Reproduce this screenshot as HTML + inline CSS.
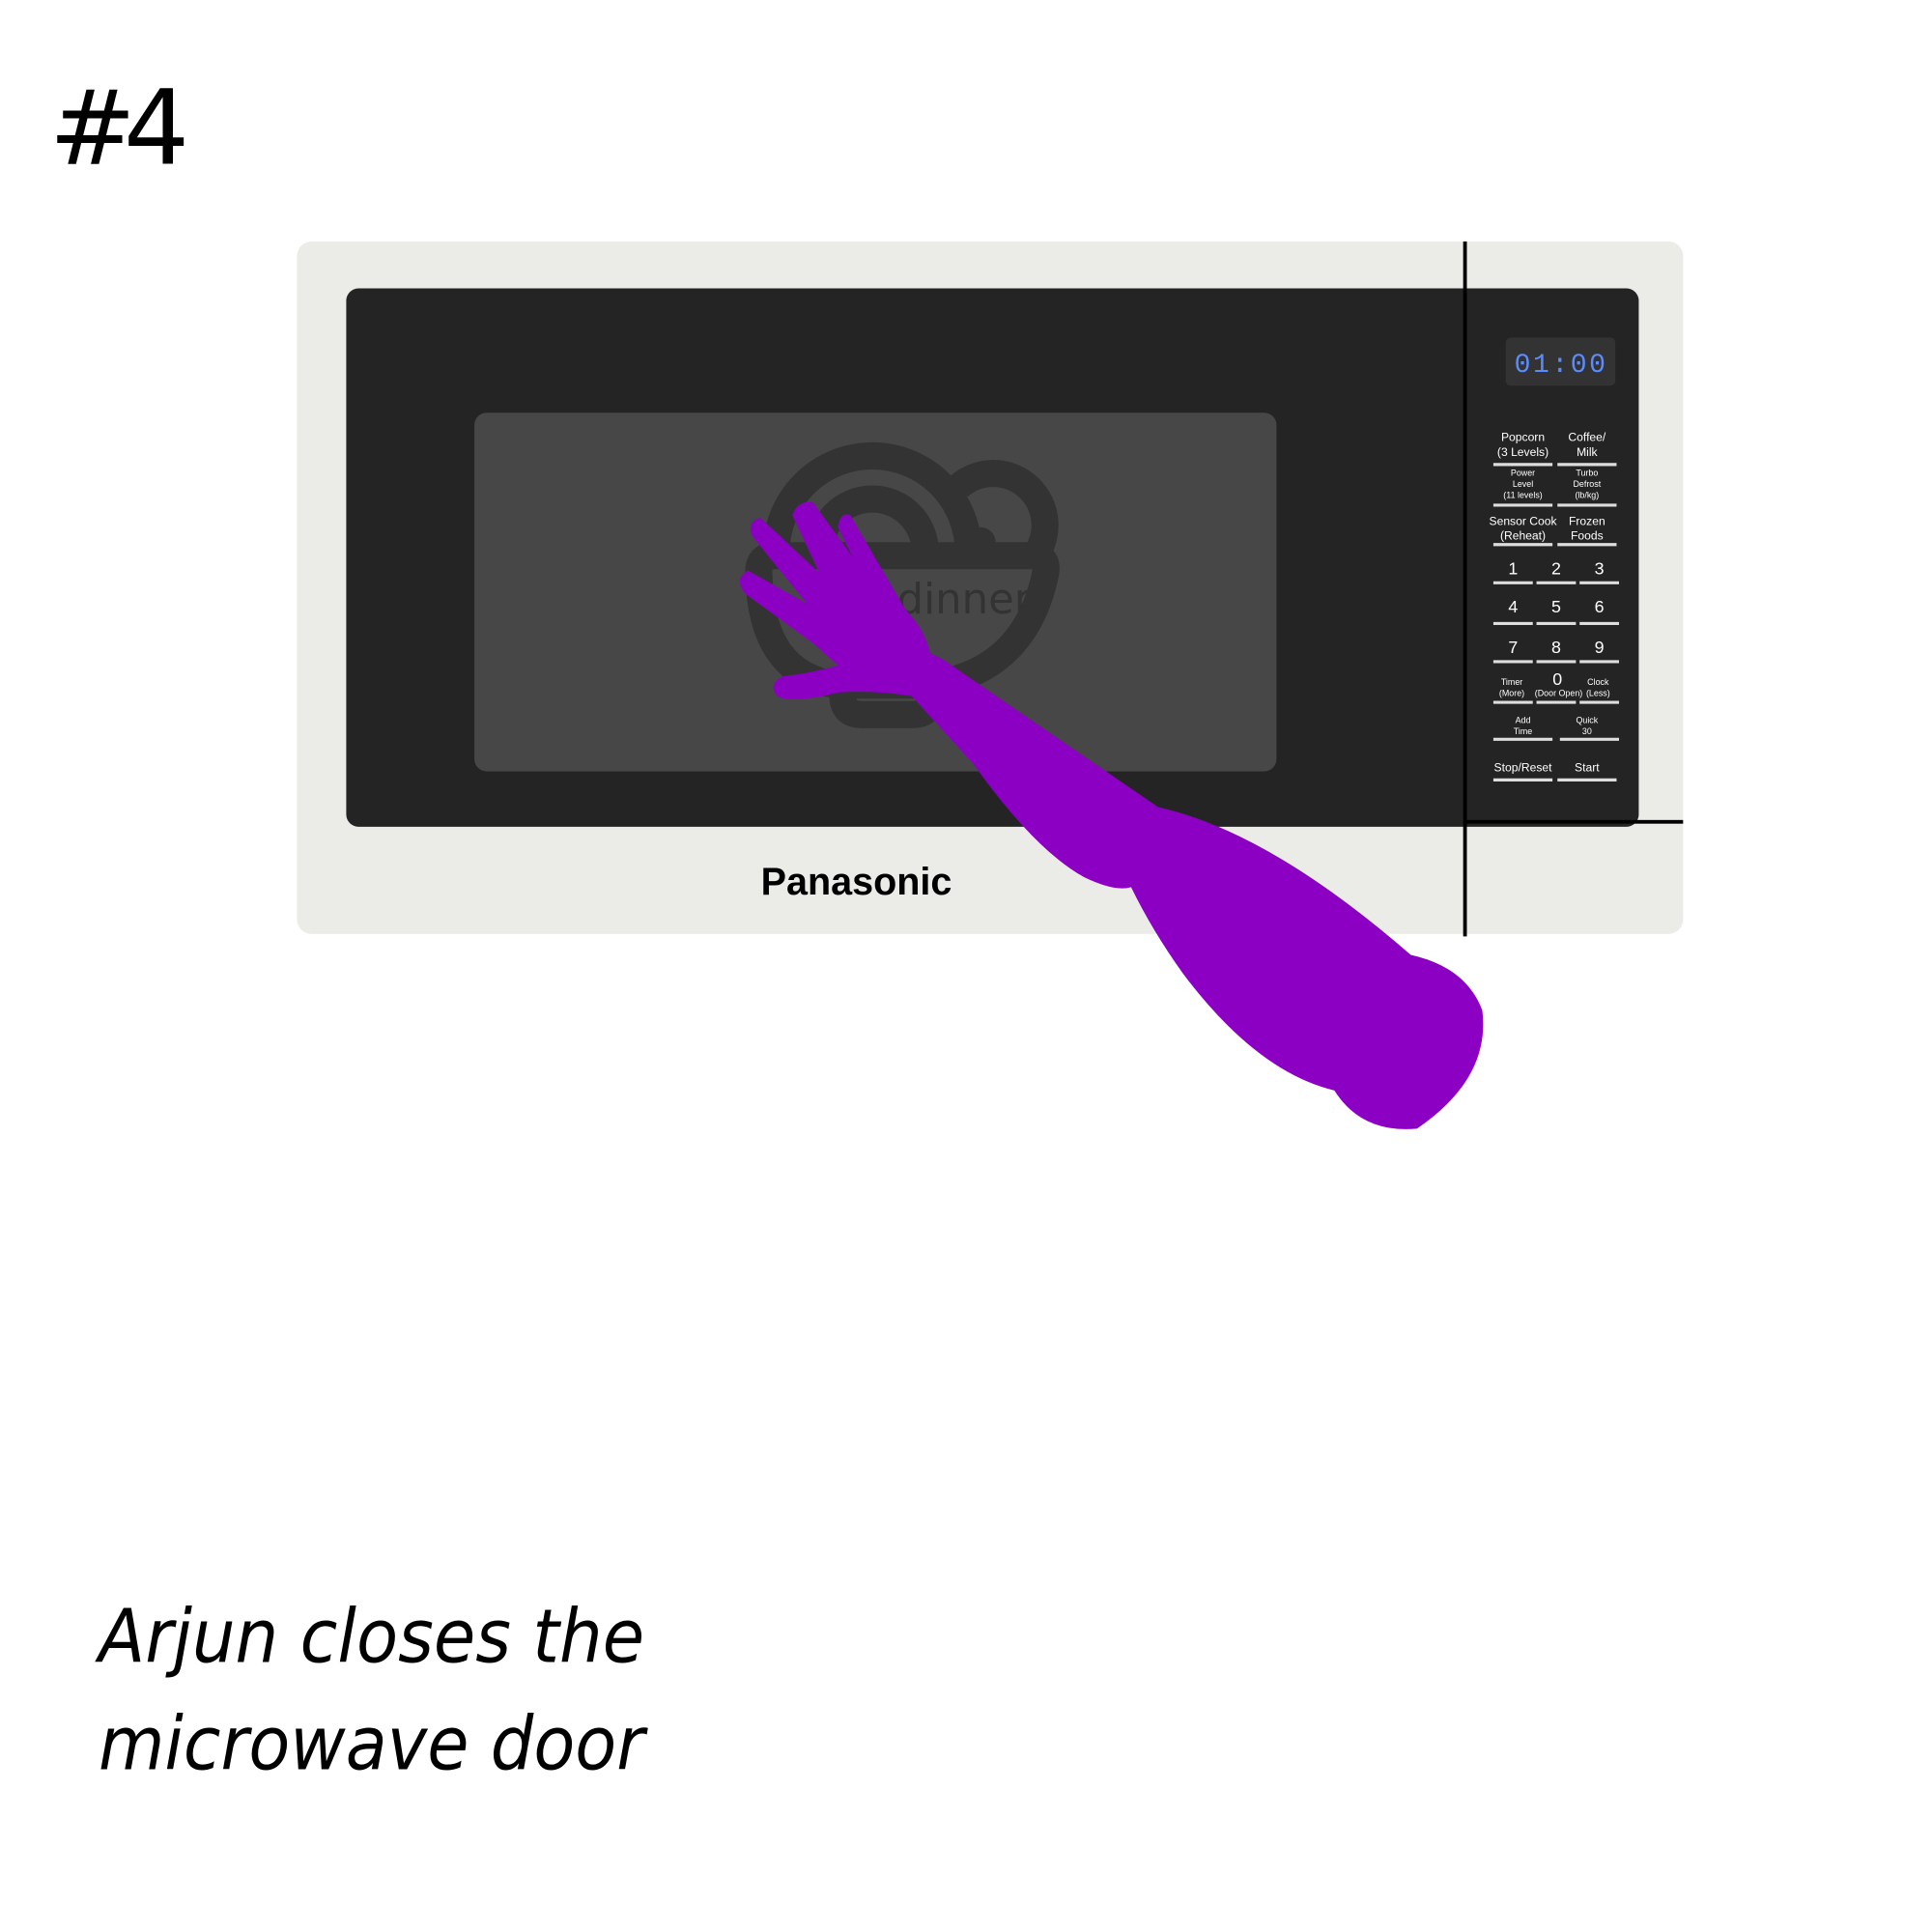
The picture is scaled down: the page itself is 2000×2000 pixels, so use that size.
<!DOCTYPE html>
<html><head><meta charset="utf-8"><style>
html,body{margin:0;padding:0;background:#fff;width:2000px;height:2000px;overflow:hidden}
svg{display:block}
.p{font-family:"Liberation Sans",sans-serif;fill:#fff;text-anchor:middle}
</style></head><body>
<svg width="2000" height="2000" viewBox="0 0 1568 1568" xmlns="http://www.w3.org/2000/svg">
<rect width="1568" height="1568" fill="#fff"/>
<text x="40" y="133" font-family="'DejaVu Sans','Liberation Sans',sans-serif" font-size="84" fill="#000" letter-spacing="-10">#4</text>
<rect x="241" y="196" width="1125" height="562" rx="12" fill="#ebebe7"/>
<rect x="281" y="234" width="1049" height="437" rx="10" fill="#242424"/>
<rect x="385" y="335" width="651" height="291" rx="10" fill="#474747"/>
<g fill="none" stroke="#333" stroke-width="22">
<path d="M630 448 A78 78 0 0 1 786 448"/>
<path d="M665 448 A43 43 0 0 1 751 448"/>
<path d="M778 395 A42 42 0 0 1 842 448"/>
<circle cx="796" cy="440" r="12" fill="#333" stroke="none"/>
<path d="M628 451 H838 Q852 451 848 468 Q830 548 750 556 H680 Q618 548 616 468 Q614 451 628 451 Z"/>
<path d="M685 556 Q680 580 700 580 H740 Q760 580 755 556"/>
</g>
<text x="728" y="498" font-family="'DejaVu Sans','Liberation Sans',sans-serif" font-size="34" fill="#333">dinner</text>
<rect x="1222" y="274" width="89" height="39" rx="4" fill="#333"/>
<text x="1267" y="302" font-family="'Liberation Mono',monospace" font-size="22" fill="#5b8cff" text-anchor="middle" letter-spacing="2">01:00</text>
<g class="p" font-size="9.5">
<text x="1236" y="358">Popcorn</text><text x="1236" y="370">(3 Levels)</text>
<text x="1288" y="358">Coffee/</text><text x="1288" y="370">Milk</text>
<text x="1236" y="426">Sensor Cook</text><text x="1236" y="438">(Reheat)</text>
<text x="1288" y="426">Frozen</text><text x="1288" y="438">Foods</text>
<text x="1236" y="626">Stop/Reset</text><text x="1288" y="626">Start</text>
</g>
<g class="p" font-size="7">
<text x="1236" y="386">Power</text><text x="1236" y="395">Level</text><text x="1236" y="404">(11 levels)</text>
<text x="1288" y="386">Turbo</text><text x="1288" y="395">Defrost</text><text x="1288" y="404">(lb/kg)</text>
<text x="1227" y="556">Timer</text><text x="1227" y="565">(More)</text>
<text x="1265" y="565">(Door Open)</text>
<text x="1297" y="556">Clock</text><text x="1297" y="565">(Less)</text>
<text x="1236" y="587">Add</text><text x="1236" y="596">Time</text>
<text x="1288" y="587">Quick</text><text x="1288" y="596">30</text>
</g>
<g class="p" font-size="14">
<text x="1228" y="466">1</text><text x="1263" y="466">2</text><text x="1298" y="466">3</text>
<text x="1228" y="497">4</text><text x="1263" y="497">5</text><text x="1298" y="497">6</text>
<text x="1228" y="530">7</text><text x="1263" y="530">8</text><text x="1298" y="530">9</text>
<text x="1264" y="556">0</text>
</g>
<g stroke="#ddd" stroke-width="2.5">
<path d="M1212 377H1260M1264 377H1312M1212 410H1260M1264 410H1312M1212 442H1260M1264 442H1312M1212 633H1260M1264 633H1312"/>
<path d="M1212 473H1244M1247 473H1279M1282 473H1314M1212 506H1244M1247 506H1279M1282 506H1314M1212 537H1244M1247 537H1279M1282 537H1314M1212 570H1244M1247 570H1279M1282 570H1314"/>
<path d="M1212 600H1260M1266 600H1314"/>
</g>
<text x="695" y="726" font-family="'Liberation Sans',sans-serif" font-weight="bold" font-size="31" text-anchor="middle" fill="#000">Panasonic</text>
<path fill="#8c00c4" d="M765 535 L940 655 Q1030 675 1145 775 Q1190 785 1203 820 Q1210 875 1150 916 Q1105 920 1083 885 Q1020 870 960 790 Q935 755 918 720 Q905 724 880 712 Q840 690 790 620 L740 565 Q710 560 680 562 Q650 570 632 566 Q622 556 635 549 Q660 546 680 540 L660 522 L605 482 Q595 470 607 463 L655 490 L612 437 Q604 425 617 420 L665 465 L643 418 Q648 405 660 408 L692 452 L680 428 Q682 415 690 418 L735 495 Q750 510 755 530 Z"/>
<rect x="1187.5" y="196" width="3" height="564" fill="#000"/>
<rect x="1189" y="665.5" width="177" height="3" fill="#000"/>
<g font-family="'DejaVu Sans','Liberation Sans',sans-serif" font-style="italic" font-size="60" fill="#000">
<text x="80" y="1349" textLength="443" lengthAdjust="spacingAndGlyphs">Arjun closes the</text>
<text x="80" y="1436" textLength="443" lengthAdjust="spacingAndGlyphs">microwave door</text>
</g>
</svg>
</body></html>
